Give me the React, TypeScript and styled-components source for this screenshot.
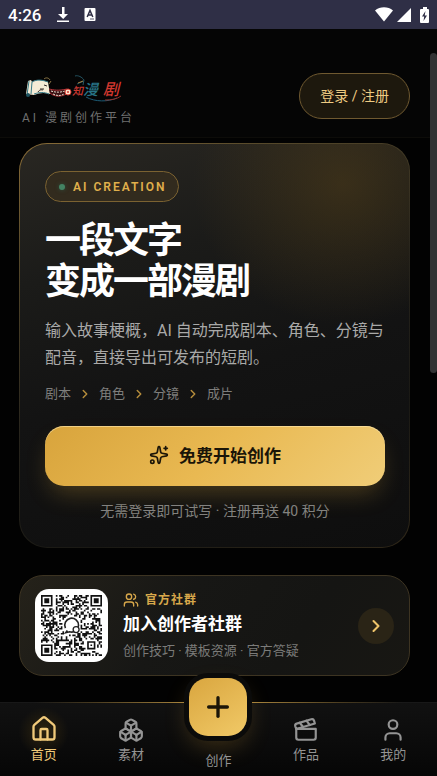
import React from "react";
import styled, { createGlobalStyle } from "styled-components";
import { Boxes, ChevronRight, Clapperboard, House, Plus, Sparkles, User, Users } from "lucide-react";

const GlobalStyle = createGlobalStyle`
  * { box-sizing: border-box; }
  html, body { margin: 0; background: #020202; }
  body, button {
    font-family: Roboto, "Noto Sans CJK SC", sans-serif;
  }
  svg { display: block; flex: none; }
`;

const Page = styled.div`
  position: relative;
  min-height: 100vh;
  display: flex;
  flex-direction: column;
  background: #020202;
  color: #fff;
`;

const StatusBar = styled.div`
  height: 29px;
  padding: 0 7px 0 8px;
  display: flex;
  align-items: center;
  justify-content: space-between;
  background: #2f2f46;
`;

const StatusGroup = styled.div<{ $gap: number }>`
  display: flex;
  align-items: center;
  gap: ${(p) => p.$gap}px;
`;

const Time = styled.span`
  font-size: 17px;
  line-height: 20px;
  font-weight: 500;
`;

const Header = styled.header`
  height: 109px;
  padding: 25px 27px 0 20px;
  display: flex;
  justify-content: space-between;
  align-items: center;
  background: #050505;
  border-bottom: 1px solid #0d0c09;
`;

const Brand = styled.div`
  display: flex;
  flex-direction: column;
  gap: 4px;
  padding: 10px 0 0 2px;
`;

const Tagline = styled.span`
  font-size: 12px;
  line-height: 18px;
  letter-spacing: 3px;
  color: #707070;
`;

const LoginButton = styled.button`
  height: 46px;
  padding: 0 20px 2px;
  border: 1px solid #6f5930;
  border-radius: 23px;
  background: #1d180d;
  color: #eecb83;
  font-size: 14px;
  font-weight: 400;
  cursor: pointer;
`;

const Main = styled.main`
  display: flex;
  flex-direction: column;
  gap: 27px;
  padding: 5px 27px 26px 19px;
`;

const Hero = styled.section`
  padding: 27px 24px 25px 25px;
  border: 1px solid transparent;
  border-radius: 28px;
  background:
    radial-gradient(ellipse 150px 140px at 83% 10%, rgba(86, 65, 25, 0.5), transparent) padding-box,
    linear-gradient(165deg, #292722 0%, #1b1b19 28%, #131313 55%, #0e0e0e 100%) padding-box,
    linear-gradient(155deg, #8a6d38 0%, #55482a 20%, #27241c 50%, #1a1914 75%, #302819 100%) border-box;
`;

const Badge = styled.div`
  width: max-content;
  height: 31px;
  padding: 0 11px 0 13px;
  display: flex;
  align-items: center;
  gap: 8px;
  border: 1px solid #7b6231;
  border-radius: 16px;
  background: #322b1e;
  color: #e0b04c;
  font-size: 12px;
  line-height: 16px;
  font-weight: 600;
  letter-spacing: 2px;
  white-space: nowrap;
`;

const Dot = styled.i`
  width: 6px;
  height: 6px;
  border-radius: 50%;
  background: #438262;
  box-shadow: 0 0 4px #31513f;
`;

const Title = styled.h1`
  margin: 19px 0 0;
  font-size: 36px;
  line-height: 41px;
  font-weight: 700;
  letter-spacing: -2px;
`;

const Lead = styled.p`
  margin: 14px -4px 0 0;
  font-size: 16px;
  line-height: 27px;
  color: #a9a9a8;
`;

const Steps = styled.ol`
  margin: 12px 0 0;
  padding: 0;
  list-style: none;
  display: flex;
  gap: 7px;
  font-size: 13px;
  line-height: 22px;
  color: #7e7e7c;
`;

const Step = styled.li`
  display: flex;
  align-items: center;
  gap: 7px;
  svg { color: #b58d3c; }
`;

const StartButton = styled.button`
  width: 100%;
  height: 60px;
  margin-top: 21px;
  padding: 0 0 3px;
  display: flex;
  align-items: center;
  justify-content: center;
  gap: 10px;
  border: 0;
  border-radius: 19px;
  background: linear-gradient(135deg, #d8a43c 0%, #e9b952 50%, #f0cd78 100%);
  box-shadow: 0 12px 24px -6px rgba(216, 164, 60, 0.3), inset 0 1px 0 rgba(255, 235, 180, 0.6);
  color: #1b1508;
  font-size: 17px;
  font-weight: 700;
  cursor: pointer;
`;

const Note = styled.p`
  margin: 14px 0 0;
  font-size: 14px;
  line-height: 22px;
  text-align: center;
  color: #83827f;
`;

const Community = styled.a`
  display: flex;
  align-items: center;
  gap: 15px;
  padding: 13px 15px;
  border: 1px solid #3d3422;
  border-radius: 24px;
  background: linear-gradient(125deg, #25221a 0%, #171715 40%, #151513 70%, #181713 100%);
  color: inherit;
  text-decoration: none;
`;

const QrFrame = styled.div`
  padding: 6px;
  border-radius: 14px;
  background: #fff;
`;

const CommunityText = styled.div`
  flex: 1;
  min-width: 0;
`;

const CommunityTag = styled.div`
  display: flex;
  align-items: center;
  gap: 6px;
  font-size: 12px;
  line-height: 20px;
  font-weight: 700;
  letter-spacing: 1px;
  color: #d8a84b;
`;

const CommunityTitle = styled.h2`
  margin: 1px 0 4px;
  font-size: 17px;
  line-height: 26px;
  font-weight: 700;
`;

const CommunityHint = styled.p`
  margin: 0;
  font-size: 13px;
  line-height: 20px;
  color: #7b7b79;
`;

const Arrow = styled.span`
  width: 36px;
  height: 36px;
  display: grid;
  place-items: center;
  border-radius: 50%;
  background: #2a2416;
  color: #eec46a;
`;

const TabBar = styled.nav`
  height: 74px;
  margin-top: auto;
  display: grid;
  grid-template-columns: repeat(5, 1fr);
  grid-template-rows: minmax(0, 1fr);
  border-top: 1px solid;
  border-image: linear-gradient(90deg, #181818 8%, #4a3c20 22%, #a5823c 42%, #a5823c 58%, #4a3c20 78%, #181818 92%) 1;
  background: linear-gradient(#111111, #060606);
`;

const Tab = styled.button<{ $active?: boolean }>`
  display: flex;
  flex-direction: column;
  align-items: center;
  justify-content: flex-end;
  gap: 2px;
  padding: 0 0 11px;
  border: 0;
  background: ${(p) =>
    p.$active ? "radial-gradient(circle 25px at 50% 29px, #2d240f, transparent)" : "none"};
  color: ${(p) => (p.$active ? "#f0c979" : "#949494")};
  font-size: 13px;
  line-height: 20px;
  cursor: pointer;
`;

const CreateTab = styled(Tab)`
  padding-bottom: 5px;
  gap: 15px;
`;

const CreateBadge = styled.span`
  width: 58px;
  height: 58px;
  flex: none;
  display: grid;
  place-items: center;
  border-radius: 19px;
  background: linear-gradient(145deg, #d9a63f, #f1c967);
  box-shadow: 0 0 0 5px #0b0b0a, 0 10px 24px rgba(216, 164, 60, 0.24);
  color: #1b1508;
`;

const ScrollThumb = styled.div`
  position: absolute;
  top: 53px;
  right: 0;
  width: 7px;
  height: 320px;
  border-radius: 4px;
  background: #323233;
`;

const QR_SIZE = 37;

function finder(x: number, y: number): boolean | null {
  for (const [ox, oy] of [[0, 0], [30, 0], [0, 30]]) {
    const dx = x - ox;
    const dy = y - oy;
    if (dx >= -1 && dx <= 7 && dy >= -1 && dy <= 7) {
      const ring = Math.max(Math.abs(dx - 3), Math.abs(dy - 3));
      return ring === 3 || ring <= 1;
    }
  }
  const align = Math.max(Math.abs(x - 30), Math.abs(y - 30));
  if (align === 3) return false;
  return align < 3 ? align !== 1 : null;
}

function qrPath(): string {
  let seed = 4177;
  let d = "";
  for (let y = 0; y < QR_SIZE; y++) {
    for (let x = 0; x < QR_SIZE; x++) {
      seed = (seed * 48271) % 2147483647;
      const fixed = finder(x, y);
      const inLogo = Math.hypot(x - 18, y - 18) < 6;
      if (fixed ?? (!inLogo && seed / 2147483647 > 0.56)) d += `M${x} ${y}h1v1h-1z`;
    }
  }
  return d;
}

const QR_PATH = qrPath();

const QrCode = () => (
  <svg width="61" height="61" viewBox="0 0 37 37" role="img" aria-label="社群二维码">
    <path d={QR_PATH} fill="#111" />
    <path
      d="M16 21.5l-1 1.4 2.4-.6a4.2 4.2 0 1 0-2.6-2.2"
      fill="none"
      stroke="#222"
      strokeWidth="1"
    />
    <circle cx="21.3" cy="21" r="1.8" fill="#fff" stroke="#222" strokeWidth="0.8" />
  </svg>
);

const Logo = () => (
  <svg width="104" height="30" viewBox="0 0 104 30" role="img" aria-label="一知漫剧">
    <path d="M6 6l3-1 1 2c5-3 10-2 16 0l2 12c-6-2-11-1-16 1l-8-1z" fill="#f5ecd6" />
    <path d="M7 6l-2 14M10 7l-1 12M10 7c5-3 11-2 16 0M12 19c6-2 10-2 15 0" fill="none" stroke="#367b88" />
    <path d="M16 17c2-3 4-2 5-2M22 10l3 1M18 14h4" fill="none" stroke="#342c29" />
    <path d="M22 4c2-2 5-1 6 1M29 6l-2 3" fill="none" stroke="#8d7848" />
    <circle cx="6" cy="20" r="2" fill="#1e5360" />
    <path d="M27 14c5 1 9 2 18 1v2c-3 4-12 4-17 1z" fill="#3a1214" />
    <path d="M27 14c5 1 9 2 18 0M28 18c4 4 12 4 16 1" fill="none" stroke="#b5343a" />
    <path d="M29 16c6 2 11 1 14 0M31 19c4 2 8 2 11 0" fill="none" stroke="#e9ddce" strokeDasharray="2 1" />
    <circle cx="46" cy="17" r="3" fill="#ffe1cb" stroke="#d83e34" />
    <circle cx="46" cy="17" r="1" fill="#c93831" />
    <path d="M53 1c3-1 7 1 9 4l-1 5M55 9l7-3" fill="none" stroke="#245462" />
    <path d="M56 8l5-2" stroke="#a58041" />
    <g fontFamily='"Noto Sans CJK SC", sans-serif' fontStyle="italic">
      <text x="50" y="20" fontSize="11" fontWeight="500" fill="#c93831">知</text>
      <text x="61" y="20" fontSize="15" fontWeight="500" fill="#287486">漫</text>
      <text x="81" y="20" fontSize="16" fontWeight="500" fill="#d4382f">剧</text>
    </g>
    <path d="M64 22c9 5 22 5 31 1" fill="none" stroke="#1c5c77" />
    <path d="M83 25c7 0 12-1 16-4" fill="none" stroke="#913029" />
  </svg>
);

const STEPS = ["剧本", "角色", "分镜", "成片"];

export default function App() {
  return (
    <Page>
      <GlobalStyle />
      <StatusBar>
        <StatusGroup $gap={15}>
          <Time>4:26</Time>
          <StatusGroup $gap={14}>
            <svg width="14" height="17" viewBox="0 0 14 17" fill="#fff">
              <path d="M6 1h2.5v7H12l-4.8 5L2 8h4zM1 14.500h12V16H1z" />
            </svg>
            <svg width="12" height="13" viewBox="0 0 12 13">
              <rect x="0.500" width="11" height="13" rx="1" fill="#fff" />
              <path d="M3.200 9L6 2.500 8.800 9M4.200 7h3.600" fill="none" stroke="#2f2f46" strokeWidth="1.500" />
              <path d="M6 11h4" stroke="#2f2f46" strokeWidth="0.800" />
            </svg>
          </StatusGroup>
        </StatusGroup>
        <StatusGroup $gap={4}>
          <svg width="18" height="15" viewBox="0 0 18 15" fill="#fff">
            <path d="M0 3.500C5-.8 13-.8 18 3.500L9 14.500z" />
          </svg>
          <svg width="14" height="14" viewBox="0 0 14 14" fill="#fff">
            <path d="M14 0v14H0z" />
          </svg>
          <svg width="15" height="16" viewBox="0 0 15 16">
            <path d="M8 0h4v2h1q1 0 1 1v12q0 1-1 1H6q-1 0-1-1V3q0-1 1-1h2z" fill="#fff" />
            <path d="M10.500 4L7 9.500h2.200L8.500 14 12 8.500H9.700z" fill="#2f2f46" />
          </svg>
        </StatusGroup>
      </StatusBar>

      <Header>
        <Brand>
          <Logo />
          <Tagline>AI 漫剧创作平台</Tagline>
        </Brand>
        <LoginButton type="button">登录 / 注册</LoginButton>
      </Header>

      <Main>
        <Hero>
          <Badge>
            <Dot />
            AI CREATION
          </Badge>
          <Title>
            一段文字
            <br />
            变成一部漫剧
          </Title>
          <Lead>输入故事梗概，AI 自动完成剧本、角色、分镜与配音，直接导出可发布的短剧。</Lead>
          <Steps>
            {STEPS.map((step, i) => (
              <Step key={step}>
                {step}
                {i < STEPS.length - 1 && <ChevronRight size={14} strokeWidth={2.5} />}
              </Step>
            ))}
          </Steps>
          <StartButton type="button">
            <Sparkles size={20} />
            免费开始创作
          </StartButton>
          <Note>无需登录即可试写 · 注册再送 40 积分</Note>
        </Hero>

        <Community href="#community">
          <QrFrame>
            <QrCode />
          </QrFrame>
          <CommunityText>
            <CommunityTag>
              <Users size={16} />
              官方社群
            </CommunityTag>
            <CommunityTitle>加入创作者社群</CommunityTitle>
            <CommunityHint>创作技巧 · 模板资源 · 官方答疑</CommunityHint>
          </CommunityText>
          <Arrow>
            <ChevronRight size={20} strokeWidth={2.5} />
          </Arrow>
        </Community>
      </Main>

      <TabBar>
        <Tab type="button" $active aria-current="page">
          <House size={28} />
          首页
        </Tab>
        <Tab type="button">
          <Boxes size={26} />
          素材
        </Tab>
        <CreateTab type="button">
          <CreateBadge>
            <Plus size={32} strokeWidth={2.5} />
          </CreateBadge>
          创作
        </CreateTab>
        <Tab type="button">
          <Clapperboard size={26} />
          作品
        </Tab>
        <Tab type="button">
          <User size={26} />
          我的
        </Tab>
      </TabBar>
      <ScrollThumb />
    </Page>
  );
}
